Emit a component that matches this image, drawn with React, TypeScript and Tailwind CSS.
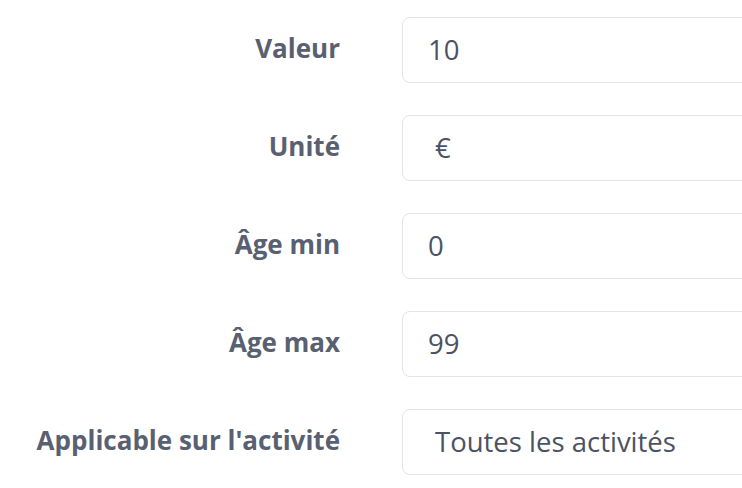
const rows = [
  { label: 'Valeur', value: '10', pad: 'pl-[25px]' },
  { label: 'Unité', value: '€', pad: 'pl-[32px]' },
  { label: 'Âge min', value: '0', pad: 'pl-[25px]' },
  { label: 'Âge max', value: '99', pad: 'pl-[25px]' },
  { label: "Applicable sur l'activité", value: 'Toutes les activités', pad: 'pl-[32px]' },
]

export default function App() {
  return (
    <div
      className="h-[488px] w-[742px] overflow-hidden bg-white pt-[17px]"
      style={{ fontFamily: '"Open Sans", "Liberation Sans", sans-serif' }}
    >
      <div className="flex flex-col gap-[32px]">
        {rows.map((r) => (
          <div key={r.label} className="flex items-center">
            <label className="w-[340px] shrink-0 text-right text-[26px] font-bold leading-none text-[#586071] -mt-[5px]">
              {r.label}
            </label>
            <div
              className={`ml-[62px] flex h-[66px] w-[420px] shrink-0 items-center rounded-[8px] border-[1.5px] border-[#e4e4e4] bg-white ${r.pad} text-[27.5px] text-[#4b5263]`}
            >
              {r.value}
            </div>
          </div>
        ))}
      </div>
    </div>
  )
}
